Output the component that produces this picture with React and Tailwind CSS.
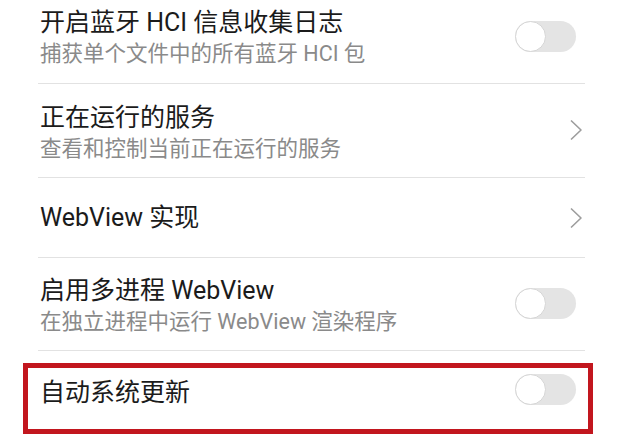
import React from 'react';

const font = { fontFamily: '"Roboto", "Noto Sans CJK SC", sans-serif' };

function Toggle({ className = '' }) {
  return (
    <div className={`relative h-[31px] w-[61px] shrink-0 rounded-full bg-[#e4e4e4] ${className}`}>
      <div className="h-[31px] w-[31px] rounded-full border border-[#d6d6d6] bg-white" />
    </div>
  );
}

function Chevron({ className = '' }) {
  return (
    <svg width="14" height="22" viewBox="0 0 14 22" className={`shrink-0 ${className}`}>
      <path d="M2 1.5 L12 11 L2 20.5" fill="none" stroke="#9d9d9d" strokeWidth="1.6" strokeLinejoin="round" />
    </svg>
  );
}

function Row({ title, sub, right, className = '', rightClass = '' }) {
  return (
    <div className={`flex items-center pl-[2px] ${className}`}>
      <div className="min-w-0 flex-1">
        <div className="text-[25px] leading-[31px] text-[#1b1b1b]">{title}</div>
        {sub && <div className="text-[21.5px] leading-[31px] text-[#8a8a8a]">{sub}</div>}
      </div>
      {right === 'toggle' && <Toggle className={`mr-[9px] ${rightClass}`} />}
      {right === 'chevron' && <Chevron className={`mr-[2px] ${rightClass}`} />}
    </div>
  );
}

function Divider() {
  return <div className="h-px bg-[#e2e2e2]" />;
}

export default function App() {
  return (
    <div className="h-[441px] w-[617px] overflow-hidden bg-white" style={font}>
      <div className="ml-[38px] mr-[32px]">
        <Row
          title="开启蓝牙 HCI 信息收集日志"
          sub="捕获单个文件中的所有蓝牙 HCI 包"
          right="toggle"
          rightClass="mb-[4px]"
          className="pb-[14px] pt-[7px]"
        />
        <Divider />
        <Row
          title="正在运行的服务"
          sub="查看和控制当前正在运行的服务"
          right="chevron"
          rightClass="mb-[6px]"
          className="pb-[13px] pt-[18px]"
        />
        <Divider />
        <Row title="WebView 实现" right="chevron" className="py-[24px]" />
        <Divider />
        <Row
          title="启用多进程 WebView"
          sub="在独立进程中运行 WebView 渲染程序"
          right="toggle"
          rightClass="mb-[6px]"
          className="pb-[13px] pt-[17px]"
        />
        <Divider />
      </div>

      {/* highlighted row */}
      <div className="ml-[23px] mr-[24px] mt-[12px] border-[5px] border-[#c2161e]">
        <div className="ml-[10px] mr-[3px]">
          <Row
            title="自动系统更新"
            right="toggle"
            rightClass="mb-[5px]"
            className="pb-[19px] pt-[6px]"
          />
        </div>
      </div>
    </div>
  );
}
